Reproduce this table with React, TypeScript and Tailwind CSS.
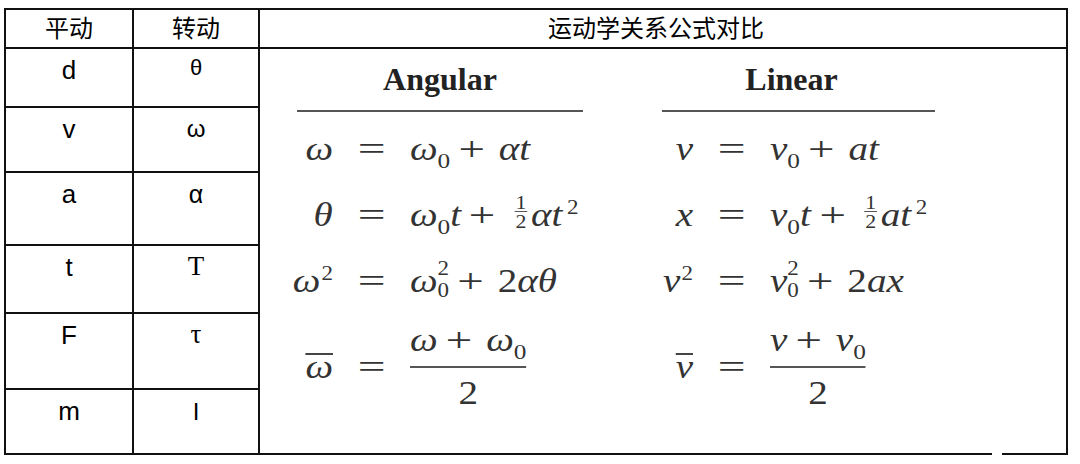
import React from "react";

const sans = "font-['Liberation_Sans','Noto_Sans_CJK_SC',sans-serif]";
const serif = "font-['Liberation_Serif',serif]";

function Sub0() {
  return <span className="not-italic text-[22px] align-[-8px] leading-[0px]">0</span>;
}
function Sup2({ gap }: { gap?: boolean }) {
  return <span className={`not-italic text-[20px] align-[12px] leading-[0px] ${gap ? "ml-[4px]" : "ml-[1px]"}`}>2</span>;
}
function SubSup() {
  return (
    <span className="not-italic inline-flex flex-col text-[20px] leading-[22px] align-[17px]">
      <span>2</span>
      <span>0</span>
    </span>
  );
}
function Half() {
  return (
    <span className="not-italic inline-flex flex-col items-center text-[19px] align-[17px] ml-[4px] mr-[3px]">
      <span className="leading-[16px] px-[1px] border-b border-[#555]">1</span>
      <span className="leading-[18px] pt-[1px]">2</span>
    </span>
  );
}
function Plus() {
  return <span className="not-italic inline-block scale-x-[1.2] ml-[9px] mr-[14px]">+</span>;
}

function Eq() {
  return (
    <div className="text-center">
      <span className="inline-block scale-x-[1.45]">=</span>
    </div>
  );
}

function Lhs({ children }: { children: React.ReactNode }) {
  return (
    <div className="text-right whitespace-nowrap">
      <span className="inline-block origin-right scale-x-[1.15] italic">{children}</span>
    </div>
  );
}

function Rhs({ children }: { children: React.ReactNode }) {
  return (
    <div className="whitespace-nowrap">
      <span className="inline-block origin-left scale-x-[1.15]">{children}</span>
    </div>
  );
}

const I = ({ children }: { children: React.ReactNode }) => <span className="italic">{children}</span>;

function Bar({ children }: { children: React.ReactNode }) {
  return <span className="inline-block border-t-2 border-[#444] leading-[24px]">{children}</span>;
}

function Angular() {
  return (
    <div className="flex flex-col w-[286px]">
      <div className="text-center text-[32px] leading-[32px] font-bold text-[#222]">Angular</div>
      <div className="mt-[15px] h-[2px] bg-[#555]" />
      <div className="mt-[4px] grid grid-cols-[36px_77px_1fr] h-[65px] leading-[65px]">
        <Lhs>ω</Lhs>
        <Eq />
        <Rhs>
          <I>ω</I>
          <Sub0 />
          <Plus />
          <I>αt</I>
        </Rhs>
      </div>
      <div className="grid grid-cols-[36px_77px_1fr] h-[67px] leading-[67px]">
        <Lhs>θ</Lhs>
        <Eq />
        <Rhs>
          <I>ω</I>
          <Sub0 />
          <I>t</I>
          <Plus />
          <Half />
          <I>αt</I>
          <Sup2 gap />
        </Rhs>
      </div>
      <div className="grid grid-cols-[36px_77px_1fr] h-[65px] leading-[65px]">
        <Lhs>
          ω<Sup2 />
        </Lhs>
        <Eq />
        <Rhs>
          <I>ω</I>
          <SubSup />
          <Plus />
          2<I>αθ</I>
        </Rhs>
      </div>
      <div className="mt-[9px] grid grid-cols-[36px_77px_1fr] items-center leading-[36px]">
        <Lhs>
          <Bar>ω</Bar>
        </Lhs>
        <Eq />
        <div>
          <span className="inline-flex flex-col items-center origin-left scale-x-[1.15]">
            <span className="leading-[36px] pb-[8px] border-b-2 border-[#555] whitespace-nowrap">
              <I>ω</I>
              <Plus />
              <I>ω</I>
              <Sub0 />
            </span>
            <span className="leading-[36px] pt-[7px]">2</span>
          </span>
        </div>
      </div>
    </div>
  );
}

function Linear() {
  return (
    <div className="flex flex-col w-[273px]">
      <div className="text-center pr-[14px] text-[32px] leading-[32px] font-bold text-[#222]">Linear</div>
      <div className="mt-[15px] h-[2px] bg-[#555]" />
      <div className="mt-[4px] grid grid-cols-[31px_77px_1fr] h-[65px] leading-[65px]">
        <Lhs>v</Lhs>
        <Eq />
        <Rhs>
          <I>v</I>
          <Sub0 />
          <Plus />
          <I>at</I>
        </Rhs>
      </div>
      <div className="grid grid-cols-[31px_77px_1fr] h-[67px] leading-[67px]">
        <Lhs>x</Lhs>
        <Eq />
        <Rhs>
          <I>v</I>
          <Sub0 />
          <I>t</I>
          <Plus />
          <Half />
          <I>at</I>
          <Sup2 gap />
        </Rhs>
      </div>
      <div className="grid grid-cols-[31px_77px_1fr] h-[65px] leading-[65px]">
        <Lhs>
          v<Sup2 />
        </Lhs>
        <Eq />
        <Rhs>
          <I>v</I>
          <SubSup />
          <Plus />
          2<I>ax</I>
        </Rhs>
      </div>
      <div className="mt-[9px] grid grid-cols-[31px_77px_1fr] items-center leading-[36px]">
        <Lhs>
          <Bar>v</Bar>
        </Lhs>
        <Eq />
        <div>
          <span className="inline-flex flex-col items-center origin-left scale-x-[1.15]">
            <span className="leading-[36px] pb-[8px] border-b-2 border-[#555] whitespace-nowrap">
              <I>v</I>
              <Plus />
              <I>v</I>
              <Sub0 />
            </span>
            <span className="leading-[36px] pt-[7px]">2</span>
          </span>
        </div>
      </div>
    </div>
  );
}

const leftRows: { a: string; b: string; bc: string }[] = [
  { a: "d", b: "θ", bc: `${sans} text-[22px] pt-[4px]` },
  { a: "v", b: "ω", bc: `${sans} text-[24px] pt-[6px]` },
  { a: "a", b: "α", bc: `${sans} text-[25px] pt-[6px]` },
  { a: "t", b: "T", bc: `${serif} text-[27px] pt-[5px]` },
  { a: "F", b: "τ", bc: `${serif} text-[27px] pt-[5px]` },
  { a: "m", b: "I", bc: `${sans} text-[24px] pt-[7px]` },
];

export default function App() {
  return (
    <div className="w-[1080px] h-[464px] bg-white pt-[8px] pl-[4px]">
      <div className="relative w-[1064px] border-2 border-[#111] grid grid-cols-[128px_126px_1fr] grid-rows-[39px_59px_65px_73px_68px_76px_63px] text-black">
        <div className={`${sans} border-r-2 border-b-2 border-[#111] flex items-center justify-center text-[24px]`}>平动</div>
        <div className={`${sans} border-r-2 border-b-2 border-[#111] flex items-center justify-center text-[24px]`}>转动</div>
        <div className={`${sans} border-b-2 border-[#111] flex items-center justify-center text-[24px] pr-[14px]`}>运动学关系公式对比</div>
        {leftRows.map((r, i) => (
          <React.Fragment key={r.a}>
            <div
              className={`${sans} col-start-1 border-r-2 border-[#111] ${i < leftRows.length - 1 ? "border-b-2" : ""} text-center text-[26px] leading-[30px] pt-[6px]`}
            >
              {r.a}
            </div>
            <div
              className={`${r.bc} col-start-2 border-r-2 border-[#111] ${i < leftRows.length - 1 ? "border-b-2" : ""} text-center leading-[30px]`}
            >
              {r.b}
            </div>
          </React.Fragment>
        ))}
        <div className={`${serif} col-start-3 row-start-2 row-span-6 pt-[14px] pl-[37px] flex gap-[79px] text-[34px] text-[#333]`}>
          <Angular />
          <Linear />
        </div>
        <span className="absolute left-[986px] bottom-[-2px] w-[10px] h-[2px] bg-white" />
      </div>
    </div>
  );
}
